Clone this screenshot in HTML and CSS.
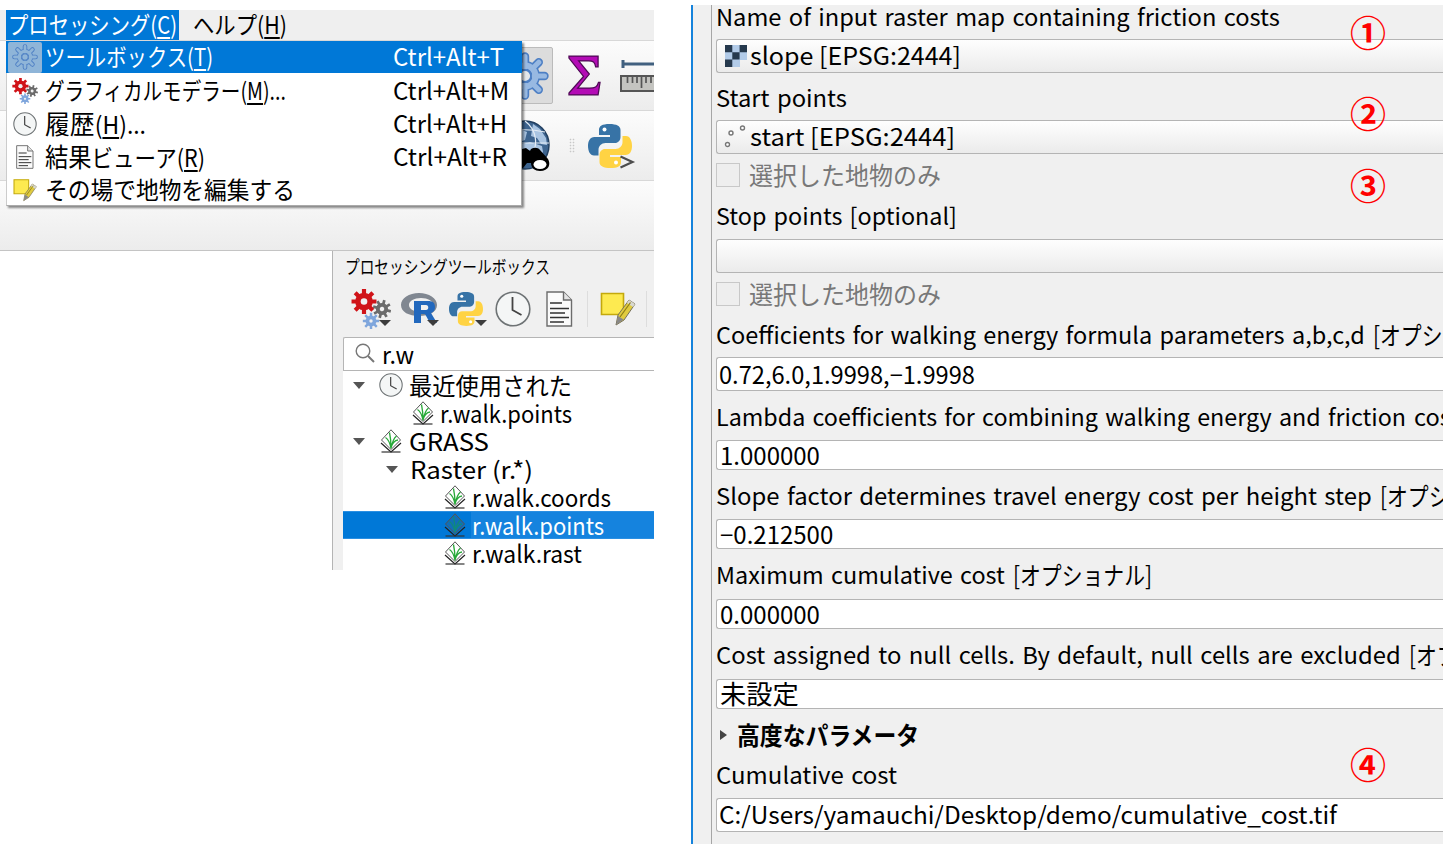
FILE: index.html
```html
<!DOCTYPE html>
<html lang="ja">
<head>
<meta charset="utf-8">
<title>r.walk.points</title>
<link rel="stylesheet" href="styles.css">
</head>
<body>
<svg class="defs" aria-hidden="true">
  <defs>
    <g id="teeth"><path d="M0-12V12M-12 0H12M-8.5-8.5L8.5 8.5M-8.5 8.500L8.500-8.500"/></g>
    <symbol id="gear" viewBox="-16 -16 32 32">
      <g fill="none" stroke-linecap="round">
        <g stroke="#4d7fc4"><g stroke-width="5.6"><path d="M0-13V-6M0 13V6M-13 0H-6M13 0H6M-9.2-9.2L-5-5M9.2 9.2L5 5M-9.2 9.2L-5 5M9.2-9.2L5-5"/></g><circle r="7" stroke-width="6"/></g>
        <g class="gear-fill"><g stroke-width="3.4"><path d="M0-13V-6M0 13V6M-13 0H-6M13 0H6M-9.2-9.2L-5-5M9.2 9.2L5 5M-9.2 9.2L-5 5M9.2-9.2L5-5"/></g><circle r="7" stroke-width="4"/></g>
      </g>
      <circle class="gear-hole" r="4" stroke="#4d7fc4" stroke-width="1.2"/>
    </symbol>
    <symbol id="gears" viewBox="0 0 40 40">
      <g fill="none">
        <g transform="translate(13 12.500) scale(1.04)" stroke="#d01318"><g stroke-width="4"><use href="#teeth"/></g><circle r="6" stroke-width="5"/><circle r="3.200" fill="#f0f0f0" stroke="none"/></g>
        <g transform="translate(31 20) scale(.76) rotate(15)" stroke="#6b6b6b"><g stroke-width="3.600"><use href="#teeth"/></g><circle r="5.500" stroke-width="5"/><circle r="3" fill="#f0f0f0" stroke="none"/></g>
        <g transform="translate(20 32) scale(.68)" stroke="#7fa6dc"><g stroke-width="3.600"><use href="#teeth"/></g><circle r="5.500" stroke-width="5"/><circle r="2.500" fill="#f0f0f0" stroke="none"/></g>
      </g>
    </symbol>
    <symbol id="clock" viewBox="0 0 36 36">
      <circle cx="18" cy="18" r="16.800" fill="#f4f6f6" stroke="#6e7375" stroke-width="1.600"/>
      <path d="M17.500 6v13l9 5" fill="none" stroke="#444" stroke-width="1.800"/>
    </symbol>
    <symbol id="doc" viewBox="0 0 27 36">
      <path d="M1 1h16.500l8 8v26H1z" fill="#fbfbfb" stroke="#6c6c6c" stroke-width="1.400"/>
      <path d="M17.500 1v8h8" fill="#e4e4e4" stroke="#6c6c6c" stroke-width="1.400"/>
      <path d="M4 12h12M4 17.500h19M4 22h15M4 26.500h19M4 31h14" stroke="#333" stroke-width="1.500"/>
    </symbol>
    <symbol id="edit" viewBox="0 0 36 36">
      <path d="M1.500 2.500h22v21h-22z" fill="#fdea50" stroke="#c4a90c" stroke-width="1.600"/>
      <path d="M16 34l2-10 11-15 6 4-11 16z" fill="#e0cb3f" stroke="#77715a" stroke-width="1"/>
      <path d="M29 9l6 4-2 3-6-4z" fill="#d8d8d0"/><path d="M20 26L30.500 11.500" stroke="#8d7d14" stroke-width="1.200"/>
      <path d="M16 34l2-9 5.500 3.500z" fill="#888"/>
    </symbol>
    <symbol id="python" viewBox="0 0 44 44">
      <path d="M21.500 0C14 0 11 2 11 6v5h11v2H6.500C2 13 0 17 0 22s2 9.500 6 9.500h4.500V26c0-4 3-7 7-7H27c3 0 5.500-2.500 5.500-6V6c0-4-4-6-11-6z" fill="#3773a6"/>
      <path d="M22.500 44C30 44 33 42 33 38v-5H22v-2h15.500C42 31 44 27 44 22s-2-10-6-10h-3.500v6c0 4-3 7-7 7H17c-3 0-5.500 2.500-5.500 6v7c0 4 4 6 11 6z" fill="#ffd343"/>
      <circle cx="16.500" cy="5.500" r="2" fill="#fff"/><circle cx="28" cy="38.500" r="2" fill="#fff"/>
    </symbol>
    <symbol id="grass" viewBox="0 0 22 24">
      <path d="M1 14l10 9 10-9" fill="none" stroke="#222" stroke-width="1.200"/>
      <path class="grass-tile" d="M11 .8L20.500 11 11 20.500 1.500 11z" stroke="#555" stroke-width="1"/>
      <path class="grass-blade" d="M11 19.500C10 14 8 10 5.500 8.500M11 19.500C11 13 10.500 8 9.500 3.500M11 19.500C12 14 14 9 16.500 7M11 19C11.500 15 15 11 18 11" fill="none" stroke-width="1.300"/>
      <path d="M1.500 23h19" stroke="#333" stroke-width="1.200"/>
    </symbol>
  </defs>
</svg>

<main class="page">
  <section class="qgis">
    <header class="menubar">
      <span class="menubar-item is-open"><span class="t m1">プロセッシング(<u>C</u>)</span></span>
      <span class="menubar-item"><span class="t m2">ヘルプ(<u>H</u>)</span></span>
    </header>
    <div class="toolbar">
      <span class="tool-pressed"><svg class="i48"><use href="#gear"/></svg></span>
      <svg class="sigma" viewBox="0 0 34 42"><path d="M1 1h30v11h-2.500C27.500 7 26 6 21 6H11l11 13.500L10 34h12c6 0 8-1 9.500-6H33l-2 13H1v-2l15-17L1 3z" fill="#b30bb5" stroke="#4f0a55" stroke-width="1.300"/></svg>
      <svg class="ruler" viewBox="0 0 34 36"><path d="M3 1v8M3 5h31" stroke="#41607f" stroke-width="3"/><path d="M1 17h36v15H1z" fill="#c4c4c0" stroke="#555" stroke-width="2"/><path d="M7.500 18v6M12.500 18v6M17 18v6M21.500 18v11M26 18v6M31 18v6" stroke="#555" stroke-width="1.700"/></svg>
    </div>
    <div class="toolbar">
      <svg class="globe" viewBox="0 0 50 52"><circle cx="25" cy="25" r="24" fill="#3d648f" stroke="#223f60" stroke-width="1.500"/><path d="M33 4l7 5 6 9 1 7-6-1-4-6-6-2 1-6zM22 24l8-2 12 4 1 6-4 6-8-7-9-2zM22 10l5 2-2 8-3 1z" fill="#a9c4e2"/><path d="M25 1c12 9 13 24 7 34M3 12c14-3 28-3 42 0M2 23h47" fill="none" stroke="#e4ecf5" stroke-width="1.200"/><path d="M18 30l8-2 4 3c1-4 8-4 10-1l8 9c3 5 1 12-8 12-5 0-9-3-9-8h-4l-4 5h-6z" fill="#000"/><ellipse cx="40" cy="44.500" rx="6.500" ry="4.500" fill="#fff"/></svg>
      <span class="grip"></span>
      <span class="pyconsole"><svg class="i44"><use href="#python"/></svg><svg class="prompt" viewBox="0 0 14 14"><path d="M1 1.500l12 5.500-12 5.500" fill="none" stroke="#4d4d4d" stroke-width="2.200"/></svg></span>
    </div>
    <div class="toolbar"></div>
    <div class="workspace">
      <div class="canvas"></div>
      <aside class="dock">
        <h2 class="dock-title"><span class="t d1">プロセッシングツールボックス</span></h2>
        <div class="dock-tools">
          <span class="dt"><svg class="i40"><use href="#gears"/></svg><i class="drop"></i></span>
          <span class="dt"><svg class="rlogo" viewBox="0 0 38 32"><path fill-rule="evenodd" d="M18 0c10 0 18 5 18 12S28 23 18 23 0 19 0 12 8 0 18 0zm2 5C13 5 8 8 8 12s5 7 12 7 12-3 12-7-5-7-12-7z" fill="#808791"/><path fill-rule="evenodd" d="M13 8h14c5 0 7 2 7 6 0 3-1 5-4 6l6 10h-7l-5-9h-4v9h-7zm7 4v5h5c3 0 3-5 0-5z" fill="#2268bd"/></svg><i class="drop"></i></span>
          <span class="dt"><svg class="i34"><use href="#python"/></svg><i class="drop"></i></span>
          <svg class="i36"><use href="#clock"/></svg>
          <svg class="docicon"><use href="#doc"/></svg>
          <span class="sep"></span>
          <svg class="i36"><use href="#edit"/></svg>
          <span class="sep last"></span>
        </div>
        <div class="search"><svg class="lens" viewBox="0 0 20 20"><circle cx="8" cy="8" r="6.800" fill="none" stroke="#777" stroke-width="1.400"/><path d="M13 13l6 6" stroke="#777" stroke-width="2"/></svg><span class="t s1">r.w</span></div>
        <div class="tree">
          <div class="row lvl0"><i class="arrow"></i><svg class="i24"><use href="#clock"/></svg><span class="t r1">最近使用された</span></div>
          <div class="row lvl1"><svg class="gicon"><use href="#grass"/></svg><span class="t r2">r.walk.points</span></div>
          <div class="row lvl0"><i class="arrow"></i><svg class="gicon"><use href="#grass"/></svg><span class="t r3">GRASS</span></div>
          <div class="row lvl2"><i class="arrow"></i><span class="t r4">Raster (r.*)</span></div>
          <div class="row lvl3"><svg class="gicon"><use href="#grass"/></svg><span class="t r5">r.walk.coords</span></div>
          <div class="row lvl3 is-selected"><svg class="gicon"><use href="#grass"/></svg><span class="t r2">r.walk.points</span></div>
          <div class="row lvl3"><svg class="gicon"><use href="#grass"/></svg><span class="t r6">r.walk.rast</span></div>
          <div class="row lvl3"><svg class="gicon"><use href="#grass"/></svg></div>
        </div>
      </aside>
    </div>
    <nav class="menu">
      <div class="menu-item is-active"><span class="mi pressed"><svg class="i26"><use href="#gear"/></svg></span><span class="t n1">ツールボックス(<u>T</u>)</span><span class="key"><span class="t k1">Ctrl+Alt+T</span></span></div>
      <div class="menu-item"><span class="mi"><svg class="i26"><use href="#gears"/></svg></span><span class="t n2">グラフィカルモデラー(<u>M</u>)...</span><span class="key"><span class="t">Ctrl+Alt+M</span></span></div>
      <div class="menu-item"><span class="mi"><svg class="i24"><use href="#clock"/></svg></span><span class="t n3"><span class="kanji">履歴</span>(<u>H</u>)...</span><span class="key"><span class="t">Ctrl+Alt+H</span></span></div>
      <div class="menu-item"><span class="mi"><svg class="i24"><use href="#doc"/></svg></span><span class="t n4"><span class="kanji">結果</span>ビューア(<u>R</u>)</span><span class="key"><span class="t k4">Ctrl+Alt+R</span></span></div>
      <div class="menu-item"><span class="mi"><svg class="i24"><use href="#edit"/></svg></span><span class="t n5">その場で地物を編集する</span></div>
    </nav>
  </section>

  <section class="dialog">
    <form class="form">
      <label class="label a"><span class="t l1">Name of input raster map containing friction costs</span></label>
      <div class="combo"><svg class="raster" viewBox="0 0 22 22"><path fill="#b2cbe8" d="M0 0h22v15h-7v7H0z"/><path fill="#26394d" d="M0 0h7.300v7.300H0zM14.600 0H22v7.300h-7.400zM7.300 7.300h7.300v7.300H7.300zM0 14.600h7.300V22H0z"/></svg><span class="t f1">slope [EPSG:2444]</span></div>
      <label class="label b"><span class="t l2">Start points</span></label>
      <div class="combo"><svg class="points" viewBox="0 0 22 24"><g fill="#fff" stroke="#777" stroke-width="1.400"><circle cx="2.500" cy="19.500" r="2"/><circle cx="6" cy="8" r="2"/><circle cx="17.500" cy="3" r="2"/></g></svg><span class="t f2">start [EPSG:2444]</span></div>
      <label class="check"><span class="box"></span><span class="t c1">選択した地物のみ</span></label>
      <label class="label c"><span class="t l3">Stop points [optional]</span></label>
      <div class="combo"></div>
      <label class="check"><span class="box"></span><span class="t c1">選択した地物のみ</span></label>
      <label class="label d"><span class="t l4">Coefficients for walking energy formula parameters a,b,c,d</span><span class="t opt">[オプショナル]</span></label>
      <div class="edit tall"><span class="t e1">0.72,6.0,1.9998,−1.9998</span></div>
      <label class="label e"><span class="t l5">Lambda coefficients for combining walking energy and friction</span><span class="t l5b">costs</span></label>
      <div class="edit"><span class="t">1.000000</span></div>
      <label class="label e"><span class="t l6">Slope factor determines travel energy cost per height step</span><span class="t opt">[オプショナル]</span></label>
      <div class="edit"><span class="t">−0.212500</span></div>
      <label class="label f"><span class="t l7">Maximum cumulative cost</span><span class="t opt">[オプショナル]</span></label>
      <div class="edit"><span class="t">0.000000</span></div>
      <label class="label f"><span class="t l8">Cost assigned to null cells. By default, null cells are excluded</span><span class="t opt">[オプショナル]</span></label>
      <div class="edit"><span class="t e4">未設定</span></div>
      <div class="advanced"><i class="tri"></i><span class="t adv">高度なパラメータ</span></div>
      <label class="label g"><span class="t l9">Cumulative cost</span></label>
      <div class="edit tall"><span class="t e5">C:/Users/yamauchi/Desktop/demo/cumulative_cost.tif</span></div>
    </form>
    <span class="mark mark1">①</span>
    <span class="mark mark2">②</span>
    <span class="mark mark3">③</span>
    <span class="mark mark4">④</span>
  </section>
</main>
</body>
</html>
```
FILE: styles.css
```css
* { box-sizing: border-box; }
body {
  margin: 0;
  background: #fff;
  color: #000;
  font-family: "Noto Sans CJK JP", "Noto Sans", sans-serif;
  font-size: 23px;
  overflow: hidden;
}
.defs { position: absolute; width: 0; height: 0; }
svg { display: block; flex: none; overflow: visible; }
.page { display: flex; justify-content: space-between; width: 1443px; height: 844px; overflow: hidden; }

/* --s condenses or widens a run of text, --y lifts it */
.t {
  display: inline-block;
  flex: none;
  white-space: nowrap;
  line-height: 1;
  transform: translate(-1px, var(--y, -1px)) scaleX(var(--s, 1));
  transform-origin: 0 50%;
}
u { text-decoration-thickness: 1.500px; text-underline-offset: 3px; }

.i24 { width: 24px; height: 24px; }
.i26 { width: 26px; height: 26px; }
.i34 { width: 34px; height: 34px; }
.i36 { width: 36px; height: 36px; }
.i40 { width: 40px; height: 40px; }
.i44 { width: 44px; height: 44px; }
.i48 { width: 48px; height: 48px; }
.gear-fill { stroke: var(--gear-fill, #98b9e2); }
.gear-hole { fill: var(--gear-hole, #e4e7ea); }
.grass-tile { fill: var(--tile, #fff); }
.grass-blade { stroke: var(--blade, #27a838); }

/* main window */
.qgis { position: relative; width: 654px; height: 560px; margin-top: 10px; overflow: hidden; display: flex; flex-direction: column; background: #f0f0f0; font-size: 24px; }
.menubar { display: flex; height: 30px; padding-left: 6px; gap: 13px; background: #efefef; }
.menubar-item { display: flex; flex: none; align-items: center; height: 30px; }
.menubar-item.is-open { width: 173px; padding-left: 3px; background: #0078d7; color: #fff; }
.m1 { --s: .847; }
.m2 { --s: .889; margin-left: 2px; }
.toolbar { display: flex; align-items: center; height: 70px; flex: none; border-top: 1px solid #d8d8d8; background: linear-gradient(#fcfcfc, #ececec); }
.tool-pressed { display: flex; align-items: center; justify-content: center; width: 57px; height: 57px; margin-left: 497px; border: 1px solid #bbb; border-radius: 2px; background: #dcdcdc; }
.sigma { width: 33px; height: 41px; margin: 0 0 1px 15px; }
.ruler { width: 34px; height: 36px; margin: 2px 0 0 19px; }
.globe { width: 50px; height: 52px; margin-left: 500px; }
.grip { width: 6px; height: 15px; margin-left: 19px; background: radial-gradient(circle, #c8c8c8 .7px, transparent 1.100px) 0 0 / 3px 3px; }
.pyconsole { position: relative; margin-left: 13px; }
.prompt { position: absolute; left: 31px; top: 31px; width: 15px; height: 14px; }
.workspace { display: flex; flex: 1; min-height: 0; border-top: 1px solid #c4c4c4; }
.canvas { width: 333px; background: #fff; border-right: 1px solid #b4b4b4; }
.dock { flex: 1; padding-left: 10px; }
.dock-title { display: flex; align-items: center; height: 32px; margin: 0; padding-left: 3px; font-size: 18px; font-weight: 400; }
.d1 { --s: .815; }
.dock-tools { display: flex; align-items: center; height: 54px; padding: 0 0 3px 8px; gap: 10px; }
.dt { position: relative; display: flex; align-items: center; width: 40px; height: 40px; margin-right: -2px; }
.dt + .dt { width: 38px; left: 2px; margin-right: 0; }
.drop { position: absolute; right: 0; bottom: 3px; border: 6px solid transparent; border-top-color: #3c3c3c; border-bottom: 0; }
.rlogo { width: 38px; height: 32px; }
.docicon { width: 27px; height: 36px; margin-left: 5px; }
.sep { width: 1px; height: 36px; background: #ddd; margin: 0 2px 0 4px; }
.sep.last { margin-left: 0; }
.search { display: flex; align-items: center; gap: 8px; height: 34px; padding-left: 11px; border: 1px solid #b5b5b5; border-right: 0; background: #fff; border-radius: 2px 0 0 0; }
.lens { width: 20px; height: 20px; margin-top: -2px; }
.s1 { --s: .966; --y: 0px; }
.tree { height: 199px; background: #fff; overflow: hidden; }
.row { display: flex; align-items: center; height: 28px; }
.row .t { --y: 0px; }
.arrow { border: 6px solid transparent; border-top: 7px solid #555; border-bottom: 0; flex: none; }
.gicon { width: 22px; height: 24px; }
.lvl0 { padding-left: 10px; }
.lvl0 svg { margin: 0 7px 0 14px; }
.lvl0 .gicon { margin: 0 8px 0 15px; }
.lvl1 { padding-left: 69px; gap: 7px; }
.lvl2 { padding-left: 43px; gap: 13px; }
.lvl3 { padding-left: 101px; gap: 7px; }
.r1 { --s: .97; }
.r2 { --s: .916; }
.r3 { --s: 1.073; }
.r4 { --s: 1.077; }
.r5 { --s: .933; }
.r6 { --s: .953; }
.is-selected { --tile: #126eb8; --blade: #0f8a7c; color: #fff; background: linear-gradient(90deg, #0078d7 128px, #1583de 128px); border: solid #2b8fe2; border-width: 1px 0; }

.menu { position: absolute; left: 6px; top: 31px; width: 516px; height: 165px; background: #fff; border: 1px solid #aaa; border-top: 0; border-left-color: #ccc; box-shadow: 2px 2px 2px rgba(0,0,0,.45); }
.menu-item { display: flex; align-items: center; height: 33px; margin-left: -1px; }
.menu-item.is-active { height: 32px; margin: 0 -1px 1px; background: #0078d7; color: #fff; }
.mi { display: flex; align-items: center; justify-content: center; width: 34px; height: 31px; margin: 0 4px 0 2px; }
.pressed { --gear-fill: #8fb5d8; --gear-hole: #8fb5d8; background: #8fb5d8; border-radius: 2px; }
.key { display: flex; width: 127px; margin-left: auto; }
.is-active .key { width: 128px; }
.kanji { font-size: 26px; }
.n1 { --s: .849; }
.n2 { --s: .816; }
.n3 { --s: .955; }
.n4 { --s: .896; }
.n5 { --s: .947; }
.k4 { --s: 1.017; }

/* algorithm dialog */
.dialog { position: relative; width: 752px; height: 839px; margin-top: 5px; border-left: 2px solid #1583dc; background: #f0f0f0; overflow: hidden; }
.form { height: 100%; margin-left: 18px; padding-left: 4px; border-left: 1px solid #a6a6a6; }
.label { --y: -1.500px; display: flex; align-items: center; padding-left: 1px; }
.label .t { word-spacing: 2px; }
.a { height: 34px; padding-bottom: 10px; }
.b { height: 47px; padding-top: 3px; }
.c { height: 44px; padding-bottom: 2px; }
.d { height: 43px; }
.e { height: 49px; padding-top: 3px; }
.f { height: 50px; padding-top: 3px; }
.g { height: 37px; padding-bottom: 8px; }
.l1 { --s: 1.029; }
.l2 { --s: 1.034; }
.l3 { --s: 1.015; }
.l4 { --s: 1.021; width: 649px; }
.l5 { --s: 1.013; width: 690px; }
.l5b { --s: 1.026; margin-left: 8px; }
.l6 { --s: 1.038; width: 656px; }
.l7 { --s: 1.017; width: 289px; }
.l8 { --s: 1.036; width: 685px; }
.l9 { --s: 1.043; }
.opt { --s: .833; margin-left: 8px; font-size: 25px; }
.combo, .edit { display: flex; align-items: center; border: 1px solid #b4b4b4; border-right: 0; border-radius: 3px 0 0 3px; margin-right: -2px; font-size: 24px; }
.combo { height: 34px; padding-left: 8px; background: linear-gradient(#fefefe, #ebebeb); }
.raster { width: 22px; height: 22px; margin-right: 4px; }
.points { width: 22px; height: 24px; margin-right: 4px; }
.f1 { --s: 1.043; }
.f2 { --s: 1.065; }
.edit { --y: -.5px; height: 30px; padding-left: 4px; background: #fff; }
.edit.tall { height: 34px; padding-left: 3px; }
.e1 { --s: .985; }
.e4 { font-size: 26px; --s: 1.010; --y: -1px; }
.e5 { --s: 1.015; --y: -1px; }
.check { --y: 0px; display: flex; align-items: center; gap: 10px; height: 41px; color: #787878; font-size: 25px; }
.box { width: 24px; height: 24px; border: 1px solid #c8c8c8; background: #eee; }
.c1 { --s: .96; }
.advanced { display: flex; align-items: center; gap: 11px; height: 52px; padding-left: 4px; font-size: 25px; font-weight: 700; }
.adv { --s: .914; }
.tri { border: 5px solid transparent; border-left: 7px solid #444; border-right: 0; }
.mark { position: absolute; left: 657px; color: #f00; font-size: 36px; line-height: 36px; font-weight: 700; }
.mark1 { top: 8px; }
.mark2 { top: 89px; }
.mark3 { top: 161px; }
.mark4 { top: 740px; }
```
